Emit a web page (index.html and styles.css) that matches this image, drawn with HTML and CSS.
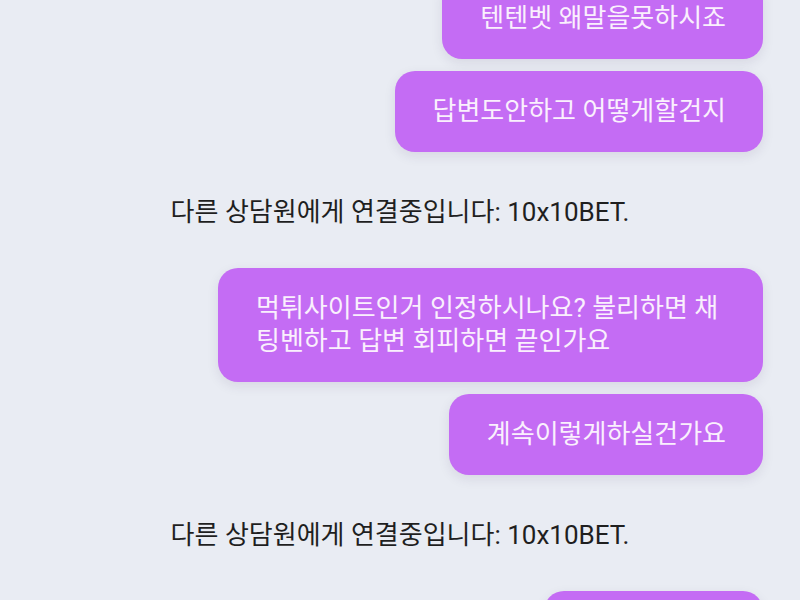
FILE: index.html
```html
<!DOCTYPE html>
<html lang="ko">
<head>
<meta charset="utf-8">
<title>Chat</title>
<link rel="stylesheet" href="styles.css">
</head>
<body>
<main class="chat">
  <div class="msg me first">텐텐벳 왜말을못하시죠</div>
  <div class="msg me">답변도안하고 어떻게할건지</div>
  <div class="system">다른 상담원에게 연결중입니다: 10x10BET.</div>
  <div class="msg me">먹튀사이트인거 인정하시나요? 불리하면 채팅벤하고 답변 회피하면 끝인가요</div>
  <div class="msg me">계속이렇게하실건가요</div>
  <div class="system">다른 상담원에게 연결중입니다: 10x10BET.</div>
  <div class="msg me">답변해주세요</div>
</main>
</body>
</html>
```
FILE: styles.css
```css
html, body {
  margin: 0;
  padding: 0;
  height: 100%;
  overflow: hidden;
  background: #e9ecf3;
}
body {
  font-family: "Roboto", "Noto Sans CJK KR", sans-serif;
  font-size: 26px;
  line-height: 33px;
}
.chat {
  display: flex;
  flex-direction: column;
  align-items: flex-end;
  gap: 12px;
  padding: 0 37px 0 37px;
}
.msg {
  box-sizing: border-box;
  max-width: 545px;
  padding: 24px 37px 24px 38px;
  border-radius: 20px;
  background: #c46cf4;
  color: #faf0fd;
  box-shadow: 0 4px 12px rgba(60, 40, 90, 0.10);
}
.first {
  margin-top: -22px;
}
.system {
  align-self: stretch;
  text-align: center;
  color: #1f1f1f;
  margin: 32px 0 27px;
}
```
